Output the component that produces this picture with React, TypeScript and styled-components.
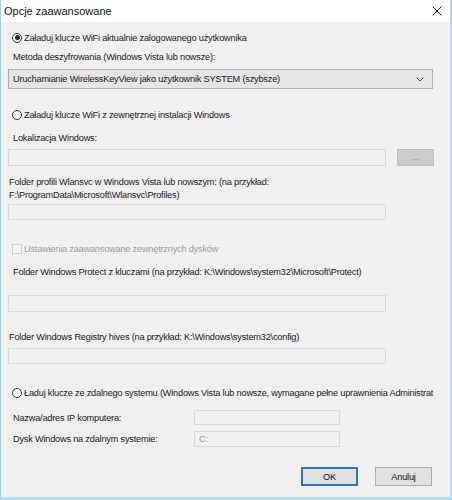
import React from 'react';
import styled, { createGlobalStyle } from 'styled-components';

const GlobalStyle = createGlobalStyle`
    html, body {
        margin: 0;
        padding: 0;
        background: #b9dff0;
    }
    * {
        box-sizing: border-box;
    }
`;

const Window = styled.div`
    width: 452px;
    height: 500px;
    display: flex;
    flex-direction: column;
    border-left: 1px solid #9fd2e6;
    border-right: 2px solid #b4dcec;
    border-bottom: 3px solid #b4dcec;
    background: #f0f0f0;
    font-family: "Liberation Sans", Arial, sans-serif;
    font-size: 9.2px;
    letter-spacing: -0.2px;
    color: #1a1a1a;
    overflow: hidden;
`;

const TitleBar = styled.div`
    height: 22px;
    flex: none;
    display: flex;
    align-items: center;
    justify-content: space-between;
    background: #ffffff;
    padding: 0 6px 0 3px;
    font-size: 11px;
    letter-spacing: 0;
    color: #111;
`;

const CloseIcon = styled.svg`
    width: 10px;
    height: 10px;
    margin-right: 2px;
`;

const Body = styled.div`
    flex: 1;
    display: flex;
    flex-direction: column;
    padding: 0 0 0 7px;
`;

const Row = styled.div<{ $top: number }>`
    display: flex;
    align-items: center;
    margin-top: ${p => p.$top}px;
    height: 13px;
    width: 425px;
    white-space: nowrap;
    overflow: hidden;
`;

const Label = styled.div<{ $top: number; $indent?: number }>`
    margin-top: ${p => p.$top}px;
    padding-left: ${p => p.$indent ?? 0}px;
    line-height: 13px;
`;

const Radio = styled.span<{ $checked?: boolean }>`
    position: relative;
    width: 10px;
    height: 10px;
    flex: none;
    border: 1px solid #333;
    border-radius: 50%;
    background: #fff;
    margin: 0 2px 0 4px;

    &::after {
        content: '';
        display: ${p => (p.$checked ? 'block' : 'none')};
        position: absolute;
        left: 1.5px;
        top: 1.5px;
        width: 5px;
        height: 5px;
        border-radius: 50%;
        background: #222;
    }
`;

const Checkbox = styled.span`
    width: 10px;
    height: 10px;
    flex: none;
    border: 1px solid #cfcfcf;
    background: #f4f4f4;
    margin: 0 2px 0 4px;
`;

const Disabled = styled.span`
    color: #9d9d9d;
`;

const Combo = styled.div`
    margin-top: 5px;
    width: 425px;
    height: 20px;
    display: flex;
    align-items: center;
    justify-content: space-between;
    padding: 0 8px 0 4px;
    border: 1px solid #adadad;
    background: #e5e5e5;
`;

const Input = styled.div<{ $top: number; $width: number; $height?: number }>`
    margin-top: ${p => p.$top}px;
    width: ${p => p.$width}px;
    height: ${p => p.$height ?? 17}px;
    flex: none;
    border: 1px solid #d9d9d9;
    background: #f0f0f0;
    color: #9d9d9d;
    display: flex;
    align-items: center;
    padding-left: 4px;
`;

const InputRow = styled.div<{ $top: number }>`
    display: flex;
    align-items: center;
    margin-top: ${p => p.$top}px;
`;

const BrowseButton = styled.div`
    width: 37px;
    height: 17px;
    margin-left: 11px;
    background: #cccccc;
    border: 1px solid #bfbfbf;
    color: #8a8a8a;
    font-size: 8px;
    display: flex;
    align-items: center;
    justify-content: center;
`;

const FieldRow = styled.div<{ $top: number }>`
    display: flex;
    align-items: center;
    margin-top: ${p => p.$top}px;
`;

const FieldLabel = styled.div`
    width: 186px;
    padding-left: 5px;
`;

const Buttons = styled.div`
    display: flex;
    margin-top: 20px;
    padding-left: 293px;
    gap: 17px;
`;

const DialogButton = styled.div<{ $default?: boolean }>`
    width: 57px;
    height: 19px;
    display: flex;
    align-items: center;
    justify-content: center;
    background: #e1e1e1;
    border: ${p => (p.$default ? '2px solid #2f78b5' : '1px solid #adadad')};
    color: #111;
`;

const App: React.FC = () => {
    return (
        <>
            <GlobalStyle />
            <Window>
                <TitleBar>
                    <span>Opcje zaawansowane</span>
                    <CloseIcon viewBox="0 0 10 10">
                        <path d="M0.5 0.5 L9.5 9.5 M9.5 0.5 L0.5 9.5" stroke="#222" strokeWidth="1" />
                    </CloseIcon>
                </TitleBar>
                <Body>
                    <Row $top={9}>
                        <Radio $checked />
                        Załaduj klucze WiFi aktualnie zalogowanego użytkownika
                    </Row>
                    <Label $top={7} $indent={5}>Metoda deszyfrowania (Windows Vista lub nowsze):</Label>
                    <Combo>
                        <span>Uruchamianie WirelessKeyView jako użytkownik SYSTEM (szybsze)</span>
                        <svg width="8" height="5" viewBox="0 0 8 5">
                            <path d="M0.5 0.5 L4 4 L7.5 0.5" fill="none" stroke="#555" strokeWidth="1" />
                        </svg>
                    </Combo>
                    <Row $top={19}>
                        <Radio />
                        Załaduj klucze WiFi z zewnętrznej instalacji Windows
                    </Row>
                    <Label $top={11} $indent={5}>Lokalizacja Windows:</Label>
                    <InputRow $top={4}>
                        <Input $top={0} $width={378} />
                        <BrowseButton>...</BrowseButton>
                    </InputRow>
                    <Label $top={10} $indent={1}>
                        Folder profili Wlansvc w Windows Vista lub nowszym: (na przykład:
                        <br />
                        F:\ProgramData\Microsoft\Wlansvc\Profiles)
                    </Label>
                    <Input $top={2} $width={378} $height={16} />
                    <Row $top={22}>
                        <Checkbox />
                        <Disabled>Ustawienia zaawansowane zewnętrznych dysków</Disabled>
                    </Row>
                    <Label $top={11} $indent={5}>
                        Folder Windows Protect z kluczami (na przykład: K:\Windows\system32\Microsoft\Protect)
                    </Label>
                    <Input $top={16} $width={378} $height={17} />
                    <Label $top={19} $indent={1}>
                        Folder Windows Registry hives (na przykład: K:\Windows\system32\config)
                    </Label>
                    <Input $top={4} $width={378} $height={16} />
                    <Row $top={22}>
                        <Radio />
                        Ładuj klucze ze zdalnego systemu (Windows Vista lub nowsze, wymagane pełne uprawnienia Administratora)
                    </Row>
                    <FieldRow $top={11}>
                        <FieldLabel>Nazwa/adres IP komputera:</FieldLabel>
                        <Input $top={0} $width={146} $height={15} />
                    </FieldRow>
                    <FieldRow $top={6}>
                        <FieldLabel>Dysk Windows na zdalnym systemie:</FieldLabel>
                        <Input $top={0} $width={146} $height={16}>C:</Input>
                    </FieldRow>
                    <Buttons>
                        <DialogButton $default>OK</DialogButton>
                        <DialogButton>Anuluj</DialogButton>
                    </Buttons>
                </Body>
            </Window>
        </>
    );
};

export default App;
